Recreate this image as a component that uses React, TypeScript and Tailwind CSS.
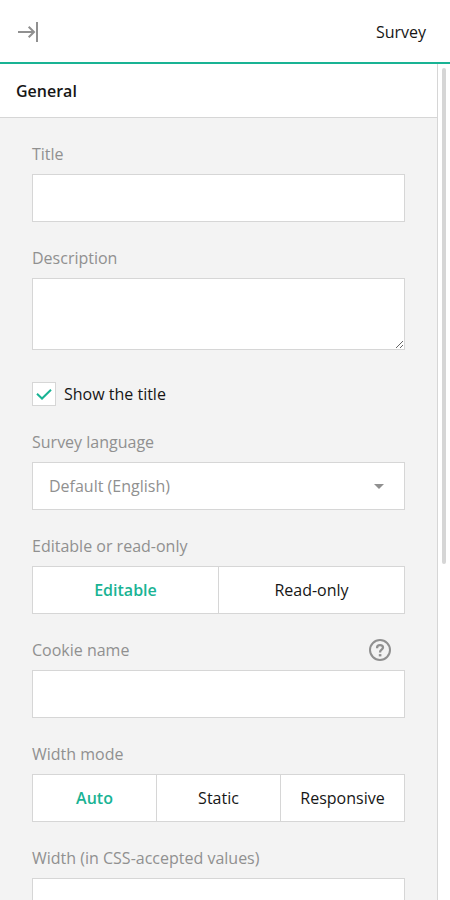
import React from 'react';

function Field({ label, help, children }: { label: string; help?: boolean; children: React.ReactNode }) {
  return (
    <div className="flex flex-col gap-2">
      <div className="flex h-6 items-center justify-between pr-3.5 text-[#909090]">
        <span>{label}</span>
        {help && (
          <svg className="h-[22px] w-[22px]" viewBox="0 0 22 22" fill="none" stroke="currentColor" strokeWidth="2">
            <circle cx="11" cy="11" r="10" />
            <path strokeWidth="2.3" d="M8.1 9.2V8.7C8.1 7 9.4 6.1 11 6.1C12.7 6.1 14 7.1 14 8.6C14 10.7 11.1 10.5 11.1 13V13.5" />
            <path strokeWidth="2.6" d="M11.1 15.1V17.4" />
          </svg>
        )}
      </div>
      {children}
    </div>
  );
}

function TextInput() {
  return <input className="block h-12 w-full border border-[#d6d6d6] bg-white px-4 outline-none" />;
}

function ButtonGroup({ options }: { options: string[] }) {
  return (
    <div className="flex h-12 divide-x divide-[#d6d6d6] border border-[#d6d6d6] bg-white">
      {options.map((option, index) => (
        <button
          key={option}
          className={index === 0 ? 'flex-1 basis-0 font-semibold text-[#19b394]' : 'flex-1 basis-0 text-[#161616]'}
        >
          {option}
        </button>
      ))}
    </div>
  );
}

export default function App() {
  return (
    <div className="flex h-[900px] w-[450px] flex-col overflow-hidden bg-white font-['Open_Sans',sans-serif] text-base leading-6 text-[#161616]">
      <header className="flex h-16 shrink-0 items-center justify-between border-b-2 border-[#19b394] pt-0.5 pr-6 pl-4">
        <svg className="h-6 w-6" viewBox="0 0 24 24" fill="none" stroke="#909090" strokeWidth="2">
          <path d="M2 12H18M12.7 6.7L18 12L12.7 17.3M21 2V22" />
        </svg>
        <span>Survey</span>
      </header>
      <div className="flex min-h-0 flex-1">
        <main className="w-[438px] shrink-0 overflow-hidden border-r border-[#d6d6d6] bg-[#f3f3f3]">
          <h2 className="flex h-[54px] items-center border-b border-[#d6d6d6] bg-white px-4 font-semibold">General</h2>
          <form className="flex flex-col gap-6 px-8 pt-6">
            <Field label="Title">
              <TextInput />
            </Field>
            <Field label="Description">
              <textarea className="block h-[72px] w-full resize border border-[#d6d6d6] bg-white px-4 outline-none" />
            </Field>
            <div className="mt-2 flex h-6 items-center gap-2">
              <span className="flex h-6 w-6 items-center justify-center border border-[#d6d6d6] bg-white">
                <svg className="h-4 w-4" viewBox="0 0 16 16" fill="none" stroke="#19b394" strokeWidth="2">
                  <path d="M1 7.8L6 12.5L15 3.7" />
                </svg>
              </span>
              <span>Show the title</span>
            </div>
            <Field label="Survey language">
              <div className="flex h-12 items-center justify-between border border-[#d6d6d6] bg-white pr-5 pl-4 text-[#909090]">
                <span>Default (English)</span>
                <svg className="h-[5px] w-[10px]" viewBox="0 0 10 5" fill="currentColor">
                  <path d="M0 0H10L5 5Z" />
                </svg>
              </div>
            </Field>
            <Field label="Editable or read-only">
              <ButtonGroup options={['Editable', 'Read-only']} />
            </Field>
            <Field label="Cookie name" help>
              <TextInput />
            </Field>
            <Field label="Width mode">
              <ButtonGroup options={['Auto', 'Static', 'Responsive']} />
            </Field>
            <Field label="Width (in CSS-accepted values)">
              <TextInput />
            </Field>
          </form>
        </main>
        <div className="mt-1 ml-1 h-[496px] w-1 rounded-sm bg-[#d6d6d6]" />
      </div>
    </div>
  );
}
